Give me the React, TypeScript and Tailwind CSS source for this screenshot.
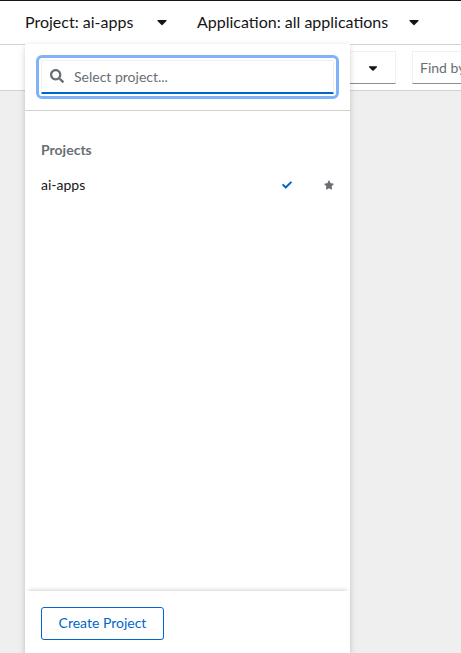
import { FaCaretDown, FaCheck, FaSearch, FaStar } from "react-icons/fa";

function ContextToggle({
  label,
  labelWidth,
  expanded = false,
}: {
  label: string;
  labelWidth: string;
  expanded?: boolean;
}) {
  return (
    <button
      type="button"
      aria-expanded={expanded}
      className="flex items-center gap-5 whitespace-nowrap text-left text-base leading-6 text-[#151515]"
    >
      <span className={labelWidth}>{label}</span>
      <FaCaretDown className="h-4 w-[10px]" />
    </button>
  );
}

function ProjectMenu() {
  return (
    <div className="absolute left-[25px] top-full z-10 w-[325px] bg-white shadow-[0_4px_8px_0_rgba(3,3,3,0.12),0_0_4px_0_rgba(3,3,3,0.08)]">
      <div className="border-b border-[#d2d2d2] p-4">
        <div className="relative">
          <FaSearch className="pointer-events-none absolute left-[9px] top-[9px] size-[14px] text-[#6a6e73]" />
          <input
            type="search"
            aria-label="Select project"
            placeholder="Select project..."
            className="block h-[34px] w-full rounded-[1px] border border-b-2 border-[#f0f0f0] border-b-[#0066cc] bg-white pl-8 pr-2 text-sm text-[#151515] outline-[3px] outline-offset-2 outline-[#80b2fa] outline-solid placeholder:text-[#6a6e73]"
          />
        </div>
      </div>
      <section className="h-[480px] pt-7">
        <h2 className="px-4 text-sm leading-[22px] font-bold text-[#6a6e73]">Projects</h2>
        <ul className="pt-2">
          <li className="flex items-center">
            <button
              type="button"
              className="flex flex-1 items-center justify-between py-1.5 pl-4 text-sm leading-5 text-[#151515]"
            >
              <span>ai-apps</span>
              <FaCheck className="size-[10px] text-[#0066cc]" />
            </button>
            <button type="button" aria-label="Favorite ai-apps" className="py-2 pl-8 pr-4 text-[#6a6e73]">
              <FaStar className="block size-[10px]" />
            </button>
          </li>
        </ul>
      </section>
      <div className="p-4 shadow-[0_-4px_4px_-3px_rgba(3,3,3,0.18)]">
        <button
          type="button"
          className="flex h-[33px] min-w-[123px] justify-center rounded-[3px] border border-[#0066cc] px-4 py-1 text-sm leading-[22px] text-[#0066cc]"
        >
          Create Project
        </button>
      </div>
    </div>
  );
}

export default function App() {
  return (
    <div className="flex h-screen flex-col overflow-hidden bg-[#efefef] font-['Lato','Open_Sans',sans-serif] text-[#151515]">
      <header className="relative flex h-[45px] shrink-0 items-center gap-[30px] border-t border-b border-t-[#151515] border-b-[#d2d2d2] bg-white pb-px pl-[25px]">
        <ContextToggle label="Project: ai-apps" labelWidth="w-[112px]" expanded />
        <ContextToggle label="Application: all applications" labelWidth="w-[192px]" />
        <ProjectMenu />
      </header>
      <div className="flex h-[46px] shrink-0 items-center gap-4 border-b border-[#d2d2d2] bg-white pl-[25px]">
        <button
          type="button"
          aria-label="Filter by"
          className="flex h-[33px] w-[371px] shrink-0 items-center justify-end border border-[#f0f0f0] border-b-[#8a8d90] pr-[17px]"
        >
          <FaCaretDown className="h-[14px] w-[10px]" />
        </button>
        <input
          type="search"
          aria-label="Find by name"
          placeholder="Find by name..."
          className="h-[33px] w-[200px] shrink-0 border border-[#f0f0f0] border-b-[#8a8d90] px-[7px] text-sm placeholder:text-[#6a6e73]"
        />
      </div>
      <main className="flex-1" />
    </div>
  );
}
